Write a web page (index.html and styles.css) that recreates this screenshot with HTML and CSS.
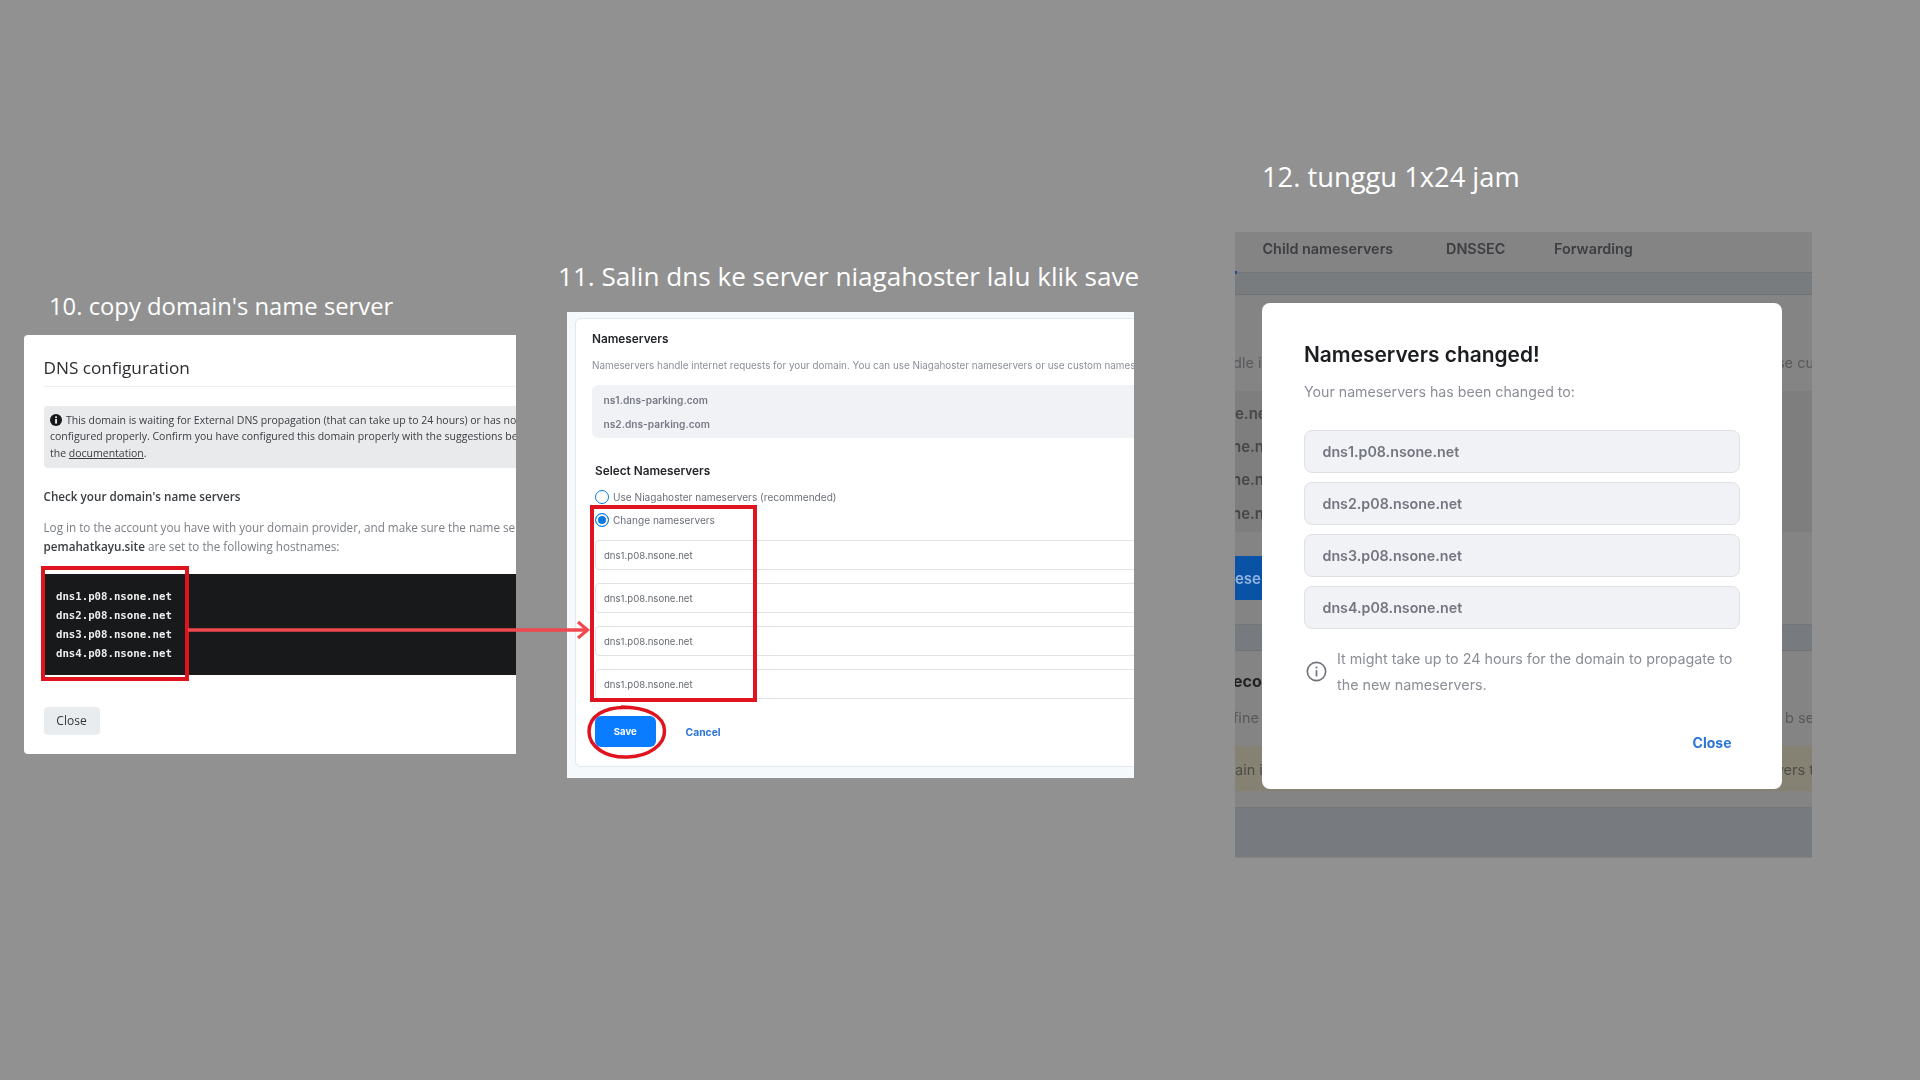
FILE: index.html
```html
<!DOCTYPE html>
<html lang="en">
<head>
    <meta charset="UTF-8">
    <meta name="viewport" content="width=device-width, initial-scale=1.0">
    <link rel="stylesheet" href="styles.css">
    <title>Tutorial nameserver</title>
</head>
<body>
<div class="slide">

    <p class="caption caption-10">10. copy domain's name server</p>
    <p class="caption caption-11">11. Salin dns ke server niagahoster lalu klik save</p>
    <p class="caption caption-12">12. tunggu 1x24 jam</p>

    <!-- step 10 -->
    <div class="panel panel-dns">
        <h2 class="dns-title">DNS configuration</h2>
        <div class="dns-alert">
            <div class="dns-line"><svg class="dns-icon" viewBox="0 0 12 12"><circle cx="6" cy="6" r="6" fill="#17181a"/><rect x="5.1" y="5" width="1.9" height="4.6" fill="#e9eaec"/><rect x="5.1" y="2.4" width="1.9" height="1.7" fill="#e9eaec"/></svg>This domain is waiting for External DNS propagation (that can take up to 24 hours) or has not been</div>
            <div class="dns-line">configured properly. Confirm you have configured this domain properly with the suggestions below or see</div>
            <div class="dns-line">the <u>documentation</u>.</div>
        </div>
        <h3 class="dns-heading">Check your domain's name servers</h3>
        <p class="dns-text">Log in to the account you have with your domain provider, and make sure the name servers for<br><b>pemahatkayu.site</b> are set to the following hostnames:</p>
        <pre class="dns-code">dns1.p08.nsone.net
dns2.p08.nsone.net
dns3.p08.nsone.net
dns4.p08.nsone.net</pre>
        <button class="dns-close">Close</button>
        <div class="mark mark-code"></div>
    </div>

    <!-- step 11 -->
    <div class="panel panel-form">
        <div class="form-card">
            <h3 class="form-title">Nameservers</h3>
            <p class="form-desc">Nameservers handle internet requests for your domain. You can use Niagahoster nameservers or use custom nameservers</p>
            <div class="form-current">
                <div>ns1.dns-parking.com</div>
                <div>ns2.dns-parking.com</div>
            </div>
            <h3 class="form-select">Select Nameservers</h3>
            <div class="radio-row"><span class="radio"></span>Use Niagahoster nameservers (recommended)</div>
            <div class="radio-row radio-row-on"><span class="radio radio-on"></span>Change nameservers</div>
            <div class="ns-input ns-input-first">dns1.p08.nsone.net</div>
            <div class="ns-input">dns1.p08.nsone.net</div>
            <div class="ns-input">dns1.p08.nsone.net</div>
            <div class="ns-input">dns1.p08.nsone.net</div>
            <div class="form-actions">
                <button class="btn-save">Save</button>
                <span class="btn-cancel">Cancel</span>
            </div>
        </div>
        <div class="mark mark-inputs"></div>
        <svg class="mark-save" viewBox="0 0 80 56"><path d="M40 3.5C18 2.5 2 12 2 27.5C2 43 19 54 41 53C62 52 78 41 77.500 26.500C77 12 60 3 34 3" fill="none" stroke="#e0141f" stroke-width="3.5"/></svg>
    </div>

    <svg class="arrow" viewBox="0 0 404 20"><path d="M0 10H399" stroke="#f0484e" stroke-width="3.5" fill="none"/><path d="M390 2L399.500 10L390 18" stroke="#f0484e" stroke-width="3.2" fill="none"/></svg>

    <!-- step 12 -->
    <div class="panel panel-done">
        <div class="back-tabs">
            <span>Child nameservers</span>
            <span>DNSSEC</span>
            <span>Forwarding</span>
        </div>
        <div class="band back-band-a"></div>
        <div class="band back-desc"><span class="cut-left">dle i</span><span class="cut-right">se cu</span></div>
        <div class="band back-list">
            <div>e.ne</div>
            <div>ne.n</div>
            <div>ne.n</div>
            <div>ne.n</div>
        </div>
        <div class="band back-button"><span class="back-blue">eser</span></div>
        <div class="band back-band-b"></div>
        <div class="band back-record"><span class="cut-left">eco</span></div>
        <div class="band back-desc back-desc-2"><span class="cut-left">fine</span><span class="cut-right">b se</span></div>
        <div class="band back-warn"><span>ain i</span><span class="cut-right">vers t</span></div>
        <div class="band back-gap"></div>
        <div class="band back-foot"></div>

        <div class="modal">
            <h2 class="modal-title">Nameservers changed!</h2>
            <p class="modal-sub">Your nameservers has been changed to:</p>
            <div class="modal-list">
                <div class="modal-ns">dns1.p08.nsone.net</div>
                <div class="modal-ns">dns2.p08.nsone.net</div>
                <div class="modal-ns">dns3.p08.nsone.net</div>
                <div class="modal-ns">dns4.p08.nsone.net</div>
            </div>
            <div class="modal-note">
                <svg class="modal-icon" viewBox="0 0 22 22"><circle cx="11" cy="11" r="9.6" fill="none" stroke="#6f7178" stroke-width="1.7"/><rect x="10.100" y="9.500" width="1.800" height="6.800" rx=".9" fill="#6f7178"/><circle cx="11" cy="6.800" r="1.100" fill="#6f7178"/></svg>
                <p>It might take up to 24 hours for the domain to propagate to the new nameservers.</p>
            </div>
            <div class="modal-foot">Close</div>
        </div>
    </div>

</div>
</body>
</html>
```

FILE: styles.css
```css
* {
    box-sizing: border-box;
}

body {
    margin: 0;
    background-color: #919191;
    font-family: "Open Sans", sans-serif;
}

.slide {
    position: relative;
    width: 1920px;
    height: 1080px;
    overflow: hidden;
    background-color: #919191;
}

.caption {
    position: absolute;
    margin: 0;
    color: #fff;
    line-height: 32px;
    white-space: nowrap;
}

.caption-10 {
    left: 49px;
    top: 290px;
    font-size: 23.8px;
}

.caption-11 {
    left: 558px;
    top: 260px;
    font-size: 26.1px;
}

.caption-12 {
    left: 1262px;
    top: 161px;
    font-size: 27.3px;
}

.panel {
    position: absolute;
    overflow: hidden;
    white-space: nowrap;
    filter: blur(.3px);
}

.mark {
    position: absolute;
    border: 4px solid #e0141f;
}

.arrow {
    position: absolute;
    left: 188px;
    top: 620px;
    width: 404px;
    height: 20px;
}

/* step 10 */
.panel-dns {
    left: 24px;
    top: 335px;
    width: 491.5px;
    height: 419px;
    padding: 20.5px 0 0 19.5px;
    background-color: #fff;
    border-radius: 4px 0 0 4px;
    color: #212529;
}

.dns-title {
    width: 520px;
    margin: 0;
    padding-bottom: 6px;
    border-bottom: 1px solid #eee;
    font-size: 17.2px;
    line-height: 24px;
    font-weight: 400;
    color: #2b2d30;
}

.dns-alert {
    width: 520px;
    height: 62px;
    margin-top: 19px;
    padding: 6px 0 0 6.5px;
    background-color: #e9eaec;
    border-radius: 4px;
    font-size: 10.5px;
    line-height: 16.7px;
    color: #3a3d41;
}

.dns-icon {
    width: 12px;
    height: 12px;
    margin-right: 4px;
    vertical-align: -2px;
}

.dns-heading {
    margin: 20.5px 0 0;
    font-size: 11.7px;
    line-height: 16px;
    font-weight: 600;
    color: #3a3d41;
}

.dns-text {
    margin: 14px 0 0;
    font-size: 11.7px;
    line-height: 19px;
    color: #7a7e84;
}

.dns-text b {
    font-weight: 600;
    color: #3a3d41;
}

.dns-code {
    width: 520px;
    height: 101px;
    margin: 18px 0 0;
    padding: 13px 0 0 12.5px;
    background-color: #18191b;
    color: #eee;
    font-family: "DejaVu Sans Mono", monospace;
    font-size: 10.7px;
    font-weight: 700;
    line-height: 19px;
}

.dns-close {
    display: block;
    width: 56px;
    height: 28.5px;
    margin-top: 31.7px;
    padding: 0;
    border: 0;
    border-radius: 4px;
    background-color: #e9ecef;
    color: #33363a;
    font-family: "Open Sans", sans-serif;
    font-size: 12px;
}

.mark-code {
    left: 17px;
    top: 230.7px;
    width: 147.7px;
    height: 115.3px;
}

/* step 11 */
.panel-form {
    left: 567px;
    top: 312px;
    width: 567px;
    height: 466px;
    padding: 6px 0 0 8px;
    background-color: #f6f9fc;
    font-family: Inter, sans-serif;
}

.form-card {
    width: 640px;
    height: 449px;
    padding: 12px 0 0 16px;
    background-color: #fff;
    border: 1px solid #e4e7eb;
    border-radius: 6px;
}

.form-title {
    margin: 0;
    font-size: 11.8px;
    line-height: 16px;
    font-weight: 600;
    color: #24262a;
}

.form-desc {
    margin: 11px 0 0;
    font-size: 9.9px;
    line-height: 14px;
    color: #8a8f98;
}

.form-current {
    margin-top: 13px;
    height: 53px;
    padding: 4px 0 0 11.5px;
    background-color: #f1f2f6;
    border-radius: 6px;
    font-size: 10.2px;
    line-height: 23.5px;
    font-weight: 600;
    color: #777b85;
}

.form-select {
    margin: 25px 0 0 3px;
    font-size: 11.8px;
    line-height: 16px;
    font-weight: 600;
    color: #24262a;
}

.radio-row {
    display: flex;
    align-items: center;
    gap: 4.5px;
    margin: 9.5px 0 0 2.5px;
    font-size: 10.1px;
    line-height: 16px;
    color: #6b6f78;
}

.radio-row-on {
    margin-top: 7px;
}

.radio {
    width: 14px;
    height: 14px;
    border: 1.5px solid #0b7be0;
    border-radius: 50%;
    background-color: #fff;
}

.radio-on {
    background-color: #0b7be0;
    box-shadow: inset 0 0 0 2px #fff;
}

.ns-input {
    height: 30px;
    margin: 13px 0 0 3px;
    padding-left: 8px;
    border: 1px solid #e0e2e6;
    border-radius: 4px;
    font-size: 9.6px;
    line-height: 29.5px;
    color: #666a70;
}

.ns-input-first {
    margin-top: 12.4px;
}

.form-actions {
    display: flex;
    align-items: center;
    gap: 30px;
    margin: 17px 0 0 3px;
}

.btn-save {
    width: 60.6px;
    height: 31.6px;
    padding: 0;
    border: 0;
    border-radius: 6px;
    background-color: #0a7cff;
    color: #fff;
    font-family: Inter, sans-serif;
    font-size: 9.6px;
    font-weight: 700;
}

.btn-cancel {
    font-size: 10.3px;
    font-weight: 700;
    color: #2b75d8;
}

.mark-inputs {
    left: 23px;
    top: 193px;
    width: 167px;
    height: 197px;
}

.mark-save {
    position: absolute;
    left: 19.5px;
    top: 392px;
    width: 80px;
    height: 56px;
}

/* step 12 */
.panel-done {
    left: 1235px;
    top: 232px;
    width: 577px;
    height: 626px;
    background-color: #848484;
    font-family: Inter, sans-serif;
    font-size: 14.5px;
    color: #4f4f52;
}

.back-tabs {
    display: flex;
    position: relative;
    height: 41px;
    padding: 7.5px 0 0 27.5px;
    border-bottom: 1px solid #747576;
    font-size: 14.4px;
    line-height: 17px;
    font-weight: 600;
    color: #3c3e42;
}

/* scrap of the active tab underline */
.back-tabs::after {
    content: "";
    position: absolute;
    left: 0;
    bottom: -2px;
    width: 2px;
    height: 3px;
    background-color: #1c4f8a;
}

.back-tabs span:nth-child(1) {
    width: 183.5px;
}

.back-tabs span:nth-child(2) {
    width: 108px;
}

.band {
    display: flex;
    justify-content: space-between;
}

.cut-left {
    margin-left: -2px;
}

.cut-right {
    margin-right: -2px;
}

.back-band-a {
    height: 22px;
    background-color: #787c7f;
    border-bottom: 1px solid #707274;
}

.back-desc {
    height: 96px;
    padding-top: 58px;
    line-height: 20px;
    color: #58595c;
}

.back-list {
    display: block;
    height: 141px;
    padding-top: 5.5px;
    background-color: #7e7e7e;
    font-size: 15px;
    font-weight: 600;
    line-height: 33.4px;
    color: #47474a;
}

.back-list div:nth-child(n+2) {
    margin-left: -3px;
}

.back-button {
    height: 93px;
    padding-top: 24px;
    border-bottom: 1px solid #747576;
}

.back-blue {
    display: block;
    width: 30px;
    height: 44px;
    background-color: #0a52a6;
    color: #8fb4de;
    font-size: 15px;
    font-weight: 600;
    line-height: 45px;
}

.back-band-b {
    height: 26px;
    background-color: #777b7f;
    border-bottom: 1px solid #707274;
}

.back-record {
    height: 40px;
    padding-top: 21.5px;
    font-size: 16px;
    font-weight: 700;
    line-height: 17px;
    color: #1f2022;
}

.back-desc-2 {
    height: 55px;
    padding-top: 16.6px;
}

.back-warn {
    height: 45px;
    background-color: #858274;
    line-height: 47px;
    color: #4d4c47;
}

.back-gap {
    height: 17px;
    border-bottom: 1px solid #747576;
}

.back-foot {
    height: 49px;
    background-color: #777b7f;
}

.modal {
    position: absolute;
    left: 26.5px;
    top: 71.3px;
    width: 520.5px;
    height: 486px;
    padding: 37.7px 42.5px 0;
    background-color: #fff;
    border-radius: 8px;
    white-space: normal;
}

.modal-title {
    margin: 0;
    font-size: 20.9px;
    line-height: 28px;
    font-weight: 600;
    color: #1b1d20;
}

.modal-sub {
    margin: 13px 0 0;
    font-size: 14.2px;
    line-height: 20px;
    color: #8b8e96;
}

.modal-list {
    display: flex;
    flex-direction: column;
    gap: 8.6px;
    margin-top: 28px;
}

.modal-ns {
    height: 43.4px;
    padding-left: 17.5px;
    background-color: #f1f2f5;
    border: 1px solid #dfe1e6;
    border-radius: 8px;
    font-size: 14.25px;
    line-height: 41px;
    font-weight: 600;
    color: #737680;
}

.modal-note {
    display: flex;
    align-items: center;
    gap: 10.5px;
    margin: 17px 0 0 1.5px;
}

.modal-icon {
    flex: none;
    width: 21px;
    height: 21px;
}

.modal-note p {
    margin: 0;
    font-size: 14.3px;
    line-height: 25.4px;
    color: #8b8e96;
}

.modal-foot {
    margin: 35.6px 8px 0 0;
    text-align: right;
    font-size: 14px;
    line-height: 20px;
    font-weight: 700;
    color: #2b75d8;
}
```
